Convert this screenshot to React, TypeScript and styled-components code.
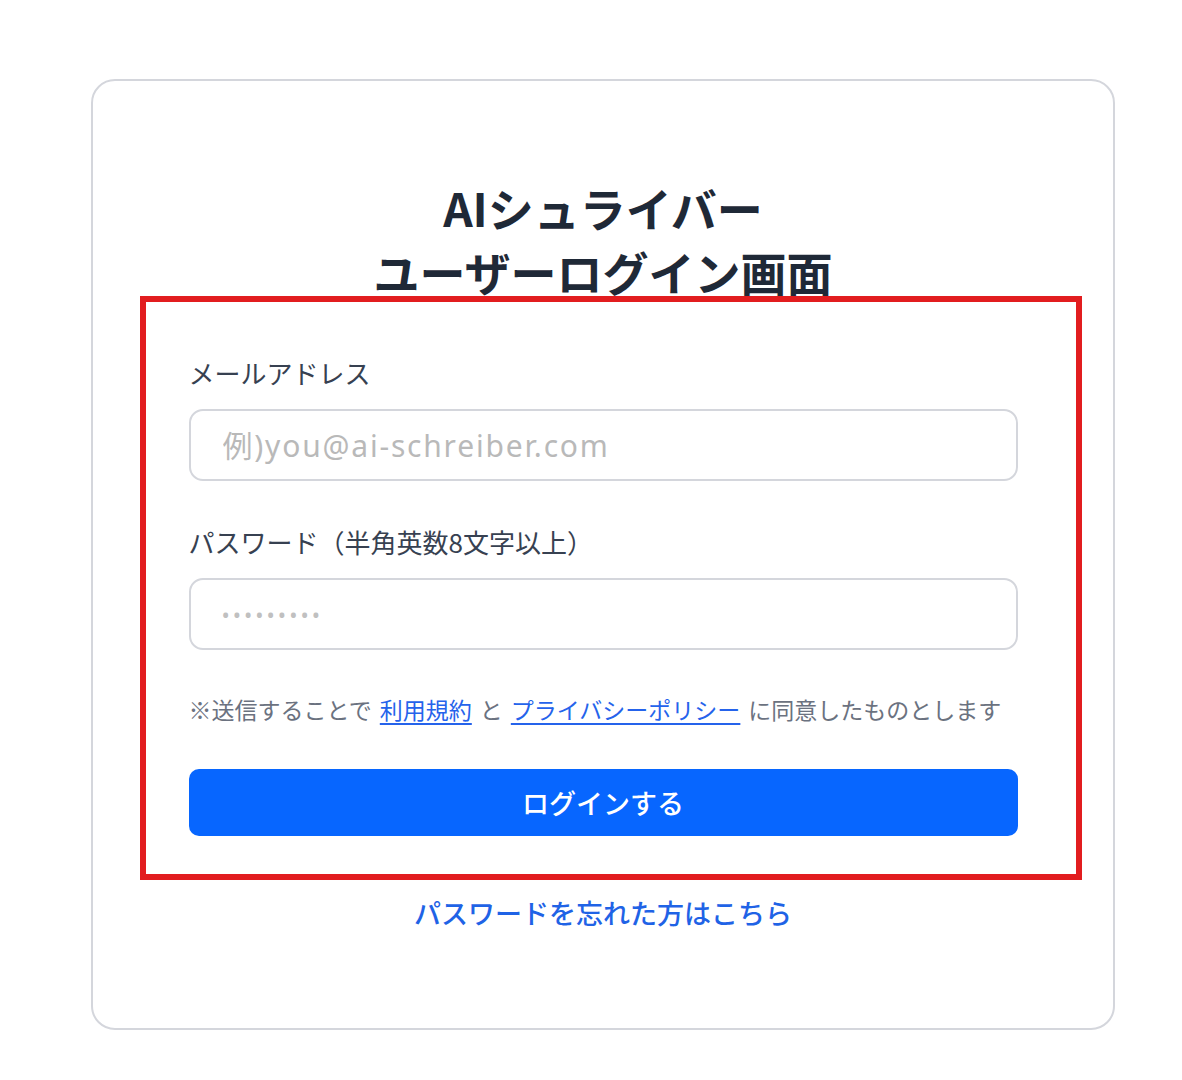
import React from 'react';
import styled, { createGlobalStyle } from 'styled-components';

const GlobalStyle = createGlobalStyle`
  html, body {
    margin: 0;
    padding: 0;
    background: #ffffff;
  }
  body {
    font-family: 'Noto Sans CJK JP', 'Noto Sans', sans-serif;
  }
`;

const Page = styled.div`
  padding: 79px 67px 50px 91px;
`;

const Card = styled.div`
  position: relative;
  width: 1024px;
  box-sizing: border-box;
  border: 2px solid #d4d6dc;
  border-radius: 24px;
  padding: 94px 0 96px;
  display: flex;
  flex-direction: column;
  align-items: center;
`;

const Title = styled.h1`
  margin: 0;
  font-size: 46px;
  line-height: 64px;
  font-weight: 700;
  color: #1f2937;
  text-align: center;
`;

const Form = styled.form`
  width: 829px;
  margin-top: 52px;
  display: flex;
  flex-direction: column;
`;

const Field = styled.div<{ $gap?: number }>`
  display: flex;
  flex-direction: column;
  gap: 18px;
  margin-bottom: ${({ $gap }) => $gap ?? 43}px;
`;

const Label = styled.label`
  font-size: 26px;
  line-height: 36px;
  color: #374151;
  font-weight: 400;
`;

const Input = styled.input`
  height: 72px;
  box-sizing: border-box;
  border: 2px solid #d4d6dc;
  border-radius: 14px;
  padding: 0 32px;
  font-family: 'Noto Sans', 'Noto Sans CJK JP', sans-serif;
  font-size: 30px;
  letter-spacing: 1.8px;
  color: #111827;
  outline: none;
  background: #fff;

  &::placeholder {
    color: #b9b9b9;
  }
`;

const Dots = styled(Input)`
  font-size: 22px;
  letter-spacing: 3px;
  padding-left: 31px;

  &::placeholder {
    color: #c0c0c0;
  }
`;

const Notice = styled.p`
  margin: 0 0 43px;
  font-size: 23px;
  line-height: 34px;
  color: #6b7280;
  white-space: nowrap;
`;

const Link = styled.a`
  color: #2563eb;
  text-decoration: underline;
  text-underline-offset: 4px;
  margin: 0 8px;
`;

const Button = styled.button`
  height: 67px;
  border: none;
  border-radius: 10px;
  background: #0766ff;
  color: #ffffff;
  font-family: 'Noto Sans CJK JP', sans-serif;
  font-size: 27px;
  font-weight: 500;
  cursor: pointer;
`;

const Forgot = styled.a`
  margin-top: 58px;
  font-size: 27px;
  line-height: 38px;
  color: #1f63e6;
  text-decoration: none;
  font-weight: 500;
`;

const Highlight = styled.div`
  position: absolute;
  left: 47px;
  top: 215px;
  width: 942px;
  height: 584px;
  box-sizing: border-box;
  border: 6px solid #e21d1f;
  pointer-events: none;
`;

export default function App() {
  return (
    <Page>
      <GlobalStyle />
      <Card>
        <Title>
          AIシュライバー
          <br />
          ユーザーログイン画面
        </Title>
        <Form onSubmit={(e) => e.preventDefault()}>
          <Field>
            <Label>メールアドレス</Label>
            <Input type='email' placeholder='例)you@ai-schreiber.com' />
          </Field>
          <Field $gap={42}>
            <Label>パスワード（半角英数8文字以上）</Label>
            <Dots type='password' placeholder='•••••••••' />
          </Field>
          <Notice>
            ※送信することで<Link href='#'>利用規約</Link>と<Link href='#'>プライバシーポリシー</Link>に同意したものとします
          </Notice>
          <Button type='submit'>ログインする</Button>
        </Form>
        <Forgot href='#'>パスワードを忘れた方はこちら</Forgot>
        <Highlight />
      </Card>
    </Page>
  );
}
